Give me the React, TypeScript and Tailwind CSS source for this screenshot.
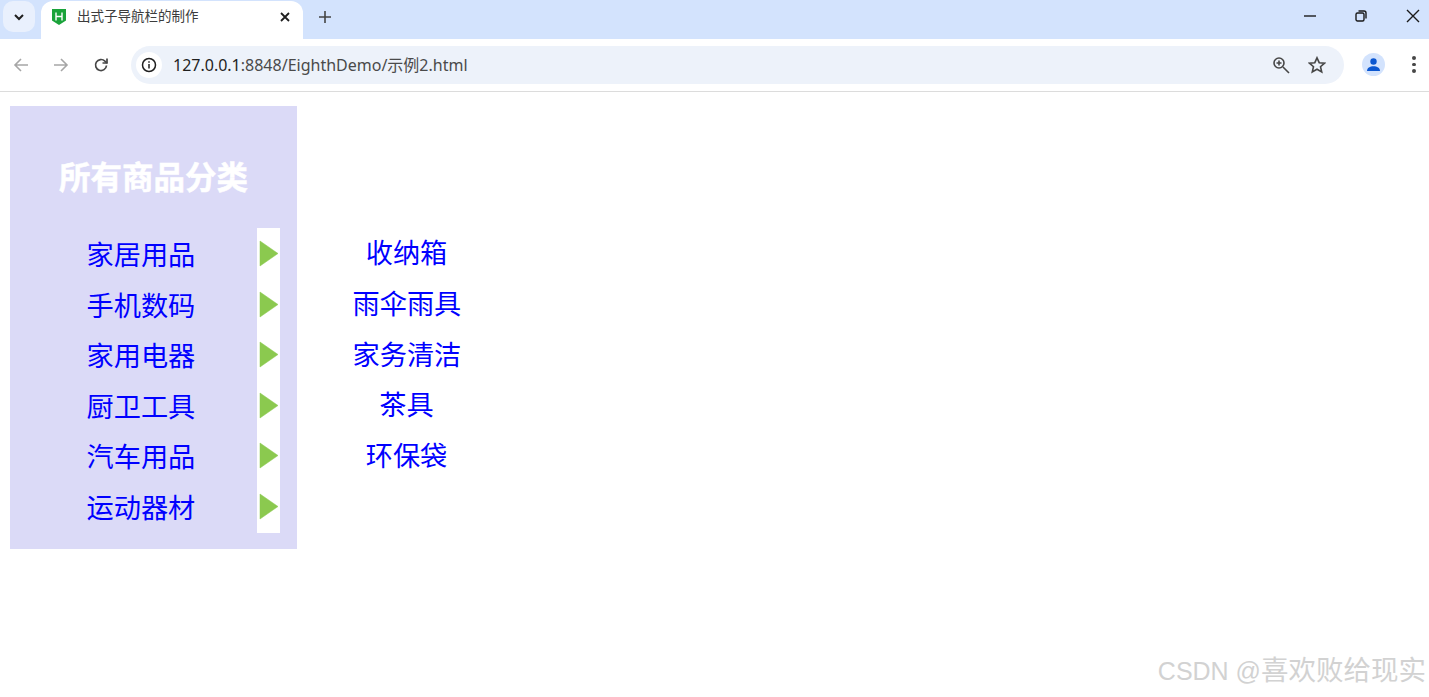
import React from 'react';

const cjk = "font-['Liberation_Sans','Noto_Sans_CJK_SC',sans-serif]";

const categories = ['家居用品', '手机数码', '家用电器', '厨卫工具', '汽车用品', '运动器材'];
const subItems = ['收纳箱', '雨伞雨具', '家务清洁', '茶具', '环保袋'];

const Arrow = () => (
  <svg width="20" height="27" viewBox="0 0 20 27" className="block">
    <polygon points="1,1 19,13.5 1,26" fill="#8bc94f" stroke="#8bc94f" strokeWidth="0.5" strokeLinejoin="round" />
  </svg>
);

const TabBar = () => (
  <div className="h-[39px] bg-[#d3e3fd] flex items-start relative">
    <div className="ml-[3px] mt-[1px] w-[32px] h-[31px] rounded-[10px] bg-[#e9f0fd] flex items-center justify-center">
      <svg width="12" height="12" viewBox="0 0 12 12" fill="none" stroke="#1f1f1f" strokeWidth="2">
        <path d="M2 4l4 4 4-4" />
      </svg>
    </div>
    <div className="ml-[6px] mt-[1px] w-[262px] h-[38px] bg-white rounded-t-[12px] flex items-center pl-[10px] pr-[12px] pb-[6px]">
      <svg width="16" height="18" viewBox="0 0 16 18" className="shrink-0">
        <path d="M1 1h14v11.5L8 17l-7-4.5z" fill="#1aa33a" />
        <path d="M5 4.500v8M11 4.500v8M5 8.500h6" stroke="#fff" strokeWidth="1.4" fill="none" />
      </svg>
      <span className={`ml-[10px] text-[13.5px] text-[#3c3c3c] ${cjk}`}>出式子导航栏的制作</span>
      <svg width="12" height="12" viewBox="0 0 12 12" className="ml-auto" stroke="#1f1f1f" strokeWidth="1.8">
        <path d="M2 2l8 8M10 2l-8 8" />
      </svg>
    </div>
    <svg width="14" height="14" viewBox="0 0 14 14" className="ml-[15px] mt-[10px]" stroke="#444" strokeWidth="1.6">
      <path d="M7 1v12M1 7h12" />
    </svg>
    <div className="ml-auto flex items-center h-[32px] text-[#1a1a1a]">
      <svg width="12" height="12" viewBox="0 0 12 12" stroke="#1a1a1a" strokeWidth="1.4" className="mr-[39px]">
        <path d="M0 6h12" />
      </svg>
      <svg width="12" height="12" viewBox="0 0 12 12" fill="none" stroke="#1a1a1a" strokeWidth="1.4" className="mr-[39px]">
        <rect x="1" y="3" width="8" height="8" rx="1.5" />
        <path d="M3.500 1h5.500a2 2 0 0 1 2 2v5.500" />
      </svg>
      <svg width="14" height="14" viewBox="0 0 14 14" stroke="#1a1a1a" strokeWidth="1.4" className="mr-[9px]">
        <path d="M1 1l12 12M13 1L1 13" />
      </svg>
    </div>
  </div>
);

const Toolbar = () => (
  <div className="h-[53px] bg-white border-b border-[#dcdcdc] flex items-center pl-[13px] pb-[1px]">
    <svg width="16" height="16" viewBox="0 0 16 16" fill="none" stroke="#a6a6a6" strokeWidth="1.6">
      <path d="M15 8H2M8 2L2 8l6 6" />
    </svg>
    <svg width="16" height="16" viewBox="0 0 16 16" fill="none" stroke="#a6a6a6" strokeWidth="1.6" className="ml-[24px]">
      <path d="M1 8h13M8 2l6 6-6 6" />
    </svg>
    <svg width="16" height="16" viewBox="0 0 16 16" fill="none" stroke="#474747" strokeWidth="1.7" className="ml-[24px]">
      <path d="M13.500 8.500a5.500 5.500 0 1 1-1.600-4.400L14 6" />
      <path d="M14 1.500V6H9.500" fill="none" />
    </svg>
    <div className="ml-[22px] w-[1213px] h-[38px] rounded-full bg-[#edf2fa] flex items-center pl-[5px] pr-[18px]">
      <div className="w-[26px] h-[26px] rounded-full bg-white flex items-center justify-center">
        <svg width="16" height="16" viewBox="0 0 16 16" fill="none" stroke="#1f1f1f" strokeWidth="1.5">
          <circle cx="8" cy="8" r="6.5" />
          <path d="M8 7v4.500M8 4.200v1.600" />
        </svg>
      </div>
      <span className="ml-[11px] pt-[1px] text-[16px] text-[#4a4a4a] font-['Noto_Sans','Noto_Sans_CJK_SC',sans-serif]">
        <span className="text-[#1f1f1f]">127.0.0.1</span>:8848/EighthDemo/示例2.html
      </span>
      <svg width="18" height="18" viewBox="0 0 18 18" fill="none" stroke="#474747" strokeWidth="1.6" className="ml-auto">
        <circle cx="7" cy="7" r="5" />
        <path d="M11 11l6 6M7 4.500v5M4.500 7h5" />
      </svg>
      <svg width="18" height="18" viewBox="0 0 18 18" fill="none" stroke="#474747" strokeWidth="1.6" className="ml-[18px]">
        <path d="M9 1.800l2.200 4.900 5.300.5-4 3.500 1.200 5.200L9 13.200l-4.700 2.700 1.200-5.200-4-3.500 5.300-.5z" />
      </svg>
    </div>
    <div className="ml-[18px] w-[23px] h-[23px] rounded-full bg-[#d3e3fd] flex items-center justify-center">
      <svg width="15" height="15" viewBox="0 0 15 15" fill="#0b57d0">
        <circle cx="7.500" cy="4.500" r="3.200" />
        <path d="M1 14c0-3.200 3-4.800 6.500-4.800S14 10.800 14 14z" />
      </svg>
    </div>
    <div className="ml-[27px] flex flex-col gap-[3px]">
      <span className="w-[3.5px] h-[3.5px] rounded-full bg-[#474747]" />
      <span className="w-[3.5px] h-[3.5px] rounded-full bg-[#474747]" />
      <span className="w-[3.5px] h-[3.5px] rounded-full bg-[#474747]" />
    </div>
  </div>
);

export default function App() {
  return (
    <div className={`relative w-[1429px] h-[697px] bg-white overflow-hidden ${cjk}`}>
      <TabBar />
      <Toolbar />
      <main className="flex items-start pl-[10px] pt-[14px]">
        {/* Sidebar Panel */}
        <aside className="w-[287px] h-[443px] bg-[#dbdaf7] flex flex-col">
          <h2 className="mt-[52px] h-[40px] text-center text-[31.5px] leading-[40px] font-bold text-white [-webkit-text-stroke:0.5px_white]">
            所有商品分类
          </h2>
          <div className="mt-[30px] flex">
            <ul className="w-[247px] pt-[3px]">
              {categories.map(name => (
                <li key={name} className="h-[50.6px] pl-[76.5px] text-[27.2px] leading-[50.6px] text-[#0000ff]">
                  {name}
                </li>
              ))}
            </ul>
            <div className="w-[23px] h-[305px] bg-white flex flex-col pl-[1.5px] pt-[12px] gap-[23.6px]">
              {categories.map(name => (
                <Arrow key={name} />
              ))}
            </div>
          </div>
        </aside>
        {/* Sub Menu */}
        <ul className="ml-[55.5px] mt-[123px] w-[108px]">
          {subItems.map(name => (
            <li key={name} className="h-[50.8px] text-center whitespace-nowrap text-[27.2px] leading-[50.8px] text-[#0000ff]">
              {name}
            </li>
          ))}
        </ul>
      </main>
      <div className="absolute right-[3px] top-[654px] text-[27.5px] leading-[34px] text-[#d2d2d2] whitespace-nowrap">
        <span className="text-[25px]">CSDN @</span>喜欢败给现实
      </div>
    </div>
  );
}
